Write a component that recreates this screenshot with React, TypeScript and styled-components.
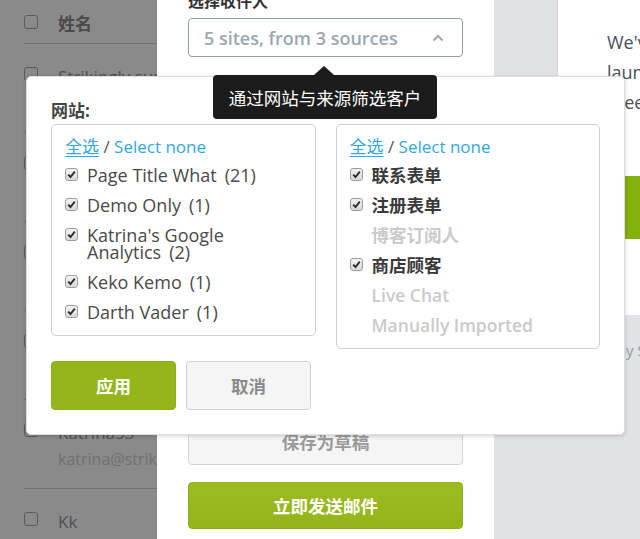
import styled, { createGlobalStyle } from "styled-components";

const GlobalStyle = createGlobalStyle`
  html, body {
    margin: 0;
    padding: 0;
  }
  body {
    font-family: "Open Sans", "Noto Sans CJK SC", sans-serif;
    background: #fff;
  }
`;

const Screen = styled.div`
  position: relative;
  width: 640px;
  height: 539px;
  overflow: hidden;
  background: #fff;
`;

/* contact list underneath the backdrop */
const ListPage = styled.div`
  padding: 0 24px;
`;

const ListHeader = styled.div`
  display: flex;
  align-items: center;
  gap: 20px;
  height: 43px;
  border-bottom: 1px solid #cfcfcf;
`;

const HeaderTitle = styled.span`
  font-size: 17px;
  font-weight: 700;
  color: #8a8a8a;
  margin-top: 1px;
`;

const ListRow = styled.div`
  display: flex;
  align-items: flex-start;
  gap: 20px;
  height: 89px;
  box-sizing: border-box;
  padding-top: 23px;
  border-bottom: 1px solid #cfcfcf;
`;

const BlankBox = styled.span`
  flex: none;
  width: 14px;
  height: 14px;
  border: 1px solid #a9a9a9;
  border-radius: 3px;
  background: #fff;
  box-sizing: border-box;
`;

const RowText = styled.div`
  display: flex;
  flex-direction: column;
  white-space: nowrap;
`;

const RowName = styled.span`
  font-size: 17px;
  line-height: 20px;
  color: #8e939e;
`;

const RowEmail = styled.span`
  font-size: 16px;
  line-height: 22px;
  margin-top: 5px;
  color: #cfcfcf;
`;

const Backdrop = styled.div`
  position: absolute;
  inset: 0;
  background: rgba(0, 0, 0, 0.46);
`;

/* compose drawer */
const Drawer = styled.div`
  position: absolute;
  top: 0;
  left: 157px;
  right: 0;
  bottom: 0;
  display: flex;
`;

const FormColumn = styled.div`
  width: 337px;
  flex: none;
  box-sizing: border-box;
  background: #fff;
  padding: 0 31px 10px;
  display: flex;
  flex-direction: column;
`;

const FieldLabel = styled.div`
  font-size: 16px;
  font-weight: 700;
  line-height: 20px;
  color: #333;
  margin-top: -9px;
`;

const SelectBox = styled.div`
  margin-top: 7px;
  height: 39px;
  box-sizing: border-box;
  border: 1px solid #8e9eab;
  border-radius: 4px;
  padding: 0 18px 0 15px;
  display: flex;
  align-items: center;
  justify-content: space-between;
  font-size: 18px;
  font-weight: 600;
  color: #9ba8b2;
`;

const FormActions = styled.div`
  margin-top: auto;
  display: flex;
  flex-direction: column;
  gap: 17px;
`;

const WideButton = styled.div<{ $primary?: boolean }>`
  height: 47px;
  box-sizing: border-box;
  border-radius: 4px;
  display: flex;
  align-items: center;
  justify-content: center;
  font-size: 17.5px;
  font-weight: 700;
  color: ${(p) => (p.$primary ? "#fff" : "#9a9a9a")};
  background: ${(p) =>
    p.$primary ? "linear-gradient(#9cbc22, #94b51a)" : "#f5f5f5"};
  border: 1px solid ${(p) => (p.$primary ? "#8fae17" : "#d3d3d3")};
`;

const Preview = styled.div`
  flex: 1;
  background: #e1e2e6;
  overflow: hidden;
`;

const MailCard = styled.div`
  margin-left: 63px;
  width: 520px;
  height: 315px;
  box-sizing: border-box;
  background: #fff;
  border-left: 1px solid #d5d6da;
  padding: 27px 49px 0;
`;

const MailText = styled.p`
  margin: 0;
  font-size: 18px;
  line-height: 30px;
  color: #4a505b;
  white-space: nowrap;
`;

const MailButton = styled.div`
  margin-top: 59px;
  height: 63px;
  width: 300px;
  background: #84b00b;
`;

const MailFooter = styled.div`
  padding: 25px 0 0 57px;
  font-size: 15px;
  color: #9a9ca3;
  white-space: nowrap;
`;

/* filter popover */
const Modal = styled.div`
  position: absolute;
  left: 26px;
  top: 76px;
  width: 599px;
  box-sizing: border-box;
  background: #fff;
  border: 1px solid #dedede;
  border-radius: 5px;
  box-shadow: 0 1px 4px rgba(0, 0, 0, 0.18);
  padding: 24px;
`;

const Columns = styled.div`
  display: grid;
  grid-template-columns: 1fr 1fr;
  gap: 20px;
  align-items: start;
`;

const ColumnLabel = styled.div`
  font-size: 17px;
  font-weight: 700;
  line-height: 20px;
  color: #444;
  margin-bottom: 3px;
`;

const OptionBox = styled.div`
  border: 1px solid #cfcfd4;
  border-radius: 5px;
  padding: 13px 13px 14px;
`;

const SelectAll = styled.div`
  font-size: 17px;
  line-height: 17px;
  color: #555;
`;

const LinkText = styled.span<{ $underline?: boolean }>`
  color: #33a8e4;
  text-decoration: ${(p) => (p.$underline ? "underline" : "none")};
  text-underline-offset: 3px;
  text-decoration-thickness: 1px;
`;

const OptionList = styled.div`
  margin-top: 12px;
  display: flex;
  flex-direction: column;
  gap: 13px;
`;

const Option = styled.div`
  display: flex;
  align-items: flex-start;
  gap: 9px;
`;

const CheckMark = styled.span<{ $hidden?: boolean }>`
  flex: none;
  width: 13px;
  height: 13px;
  margin-top: 1px;
  box-sizing: border-box;
  border: 1px solid ${(p) => (p.$hidden ? "transparent" : "#9d9d9d")};
  border-radius: 3px;
  background: ${(p) =>
    p.$hidden ? "transparent" : "linear-gradient(#f2f2f2, #d9d9d9)"};
  display: flex;
  align-items: center;
  justify-content: center;
`;

const OptionText = styled.span<{ $bold?: boolean; $disabled?: boolean }>`
  font-size: ${(p) => (p.$bold || p.$disabled ? "17.5px" : "18px")};
  line-height: 17px;
  max-width: 190px;
  font-weight: ${(p) => (p.$bold ? 700 : p.$disabled ? 600 : 400)};
  color: ${(p) => (p.$disabled ? "#cacaca" : p.$bold ? "#3a3a3a" : "#4a4a4a")};
`;

const Count = styled.span`
  margin-left: 8px;
`;

const ModalActions = styled.div`
  margin-top: 12px;
  display: flex;
  gap: 10px;
`;

const ModalButton = styled.div<{ $primary?: boolean }>`
  width: 125px;
  height: 49px;
  box-sizing: border-box;
  border-radius: 4px;
  display: flex;
  align-items: center;
  justify-content: center;
  font-size: 17.5px;
  font-weight: 700;
  color: ${(p) => (p.$primary ? "#fff" : "#8a8a8a")};
  background: ${(p) => (p.$primary ? "#95b61b" : "#f5f5f5")};
  border: 1px solid ${(p) => (p.$primary ? "#8fb016" : "#d2d2d2")};
`;

const Tooltip = styled.div`
  position: absolute;
  left: 213px;
  top: 75px;
  width: 224px;
  height: 44px;
  background: #1b1b1b;
  border-radius: 4px;
  color: #fff;
  font-size: 17.5px;
  display: flex;
  align-items: center;
  justify-content: center;
  &::before {
    content: "";
    position: absolute;
    left: 101px;
    top: -9px;
    border-left: 10px solid transparent;
    border-right: 10px solid transparent;
    border-bottom: 9px solid #1b1b1b;
  }
`;

const contacts = [
  { name: "Strikingly support", email: "support@strikingly.com" },
  { name: "Demo Only", email: "demo@strikingly.com" },
  { name: "Keko", email: "keko@strikingly.com" },
  { name: "Darth Vader", email: "vader@strikingly.com" },
  { name: "Katrina33", email: "katrina@strikingly.com" },
  { name: "Kk", email: "" },
];

const sites = [
  { label: "Page Title What", count: 21 },
  { label: "Demo Only", count: 1 },
  { label: "Katrina's Google Analytics", count: 2 },
  { label: "Keko Kemo", count: 1 },
  { label: "Darth Vader", count: 1 },
];

const sources = [
  { label: "联系表单", enabled: true },
  { label: "注册表单", enabled: true },
  { label: "博客订阅人", enabled: false },
  { label: "商店顾客", enabled: true },
  { label: "Live Chat", enabled: false },
  { label: "Manually Imported", enabled: false },
];

function Check({ hidden }: { hidden?: boolean }) {
  return (
    <CheckMark $hidden={hidden}>
      {!hidden && (
        <svg width="9" height="9" viewBox="0 0 9 9">
          <path d="M1.2 4.6 L3.5 7 L7.8 1.6" fill="none" stroke="#2e2e2e" strokeWidth="1.9" />
        </svg>
      )}
    </CheckMark>
  );
}

function App() {
  return (
    <Screen>
      <GlobalStyle />
      <ListPage>
        <ListHeader>
          <BlankBox />
          <HeaderTitle>姓名</HeaderTitle>
        </ListHeader>
        {contacts.map((c) => (
          <ListRow key={c.name}>
            <BlankBox />
            <RowText>
              <RowName>{c.name}</RowName>
              {c.email && <RowEmail>{c.email}</RowEmail>}
            </RowText>
          </ListRow>
        ))}
      </ListPage>
      <Backdrop />

      <Drawer>
        <FormColumn>
          <FieldLabel>选择收件人</FieldLabel>
          <SelectBox>
            <span>5 sites, from 3 sources</span>
            <svg width="12" height="8" viewBox="0 0 12 8">
              <path d="M1.5 6.5 L6 2 L10.5 6.5" fill="none" stroke="#9ba8b2" strokeWidth="2" />
            </svg>
          </SelectBox>
          <FormActions>
            <WideButton>保存为草稿</WideButton>
            <WideButton $primary>立即发送邮件</WideButton>
          </FormActions>
        </FormColumn>
        <Preview>
          <MailCard>
            <MailText>
              We've been busy this season!
              <br />
              launched a brand new shop
              <br />
              greeting card collection
            </MailText>
            <MailButton />
          </MailCard>
          <MailFooter>Powered by Strikingly</MailFooter>
        </Preview>
      </Drawer>

      <Modal>
        <Columns>
          <div>
            <ColumnLabel>网站:</ColumnLabel>
            <OptionBox>
              <SelectAll>
                <LinkText $underline>全选</LinkText> / <LinkText>Select none</LinkText>
              </SelectAll>
              <OptionList>
                {sites.map((s) => (
                  <Option key={s.label}>
                    <Check />
                    <OptionText>
                      {s.label}
                      <Count>({s.count})</Count>
                    </OptionText>
                  </Option>
                ))}
              </OptionList>
            </OptionBox>
          </div>
          <div>
            <ColumnLabel>来源:</ColumnLabel>
            <OptionBox>
              <SelectAll>
                <LinkText $underline>全选</LinkText> / <LinkText>Select none</LinkText>
              </SelectAll>
              <OptionList>
                {sources.map((s) => (
                  <Option key={s.label}>
                    <Check hidden={!s.enabled} />
                    <OptionText $bold={s.enabled} $disabled={!s.enabled}>
                      {s.label}
                    </OptionText>
                  </Option>
                ))}
              </OptionList>
            </OptionBox>
          </div>
        </Columns>
        <ModalActions>
          <ModalButton $primary>应用</ModalButton>
          <ModalButton>取消</ModalButton>
        </ModalActions>
      </Modal>

      <Tooltip>通过网站与来源筛选客户</Tooltip>
    </Screen>
  );
}

export default App;
